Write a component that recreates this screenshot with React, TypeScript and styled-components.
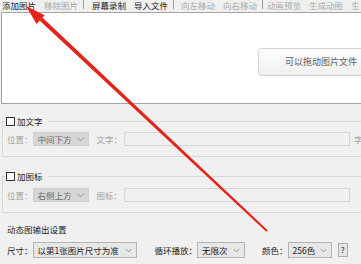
import React from 'react';
import styled, { createGlobalStyle } from 'styled-components';

const GlobalStyle = createGlobalStyle`
  html, body {
    margin: 0;
    padding: 0;
    background: #f0f0f0;
  }
  body {
    font-family: "Noto Sans CJK SC", "Liberation Sans", sans-serif;
    font-size: 8.5px;
  }
`;

const Window = styled.div`
  position: relative;
  width: 361px;
  height: 264px;
  overflow: hidden;
  background: #f0f0f0;
`;

const Toolbar = styled.div`
  display: flex;
  align-items: flex-start;
  height: 12px;
  padding-left: 2px;
  line-height: 10px;
  white-space: nowrap;
`;

const ToolItem = styled.span<{ $disabled?: boolean }>`
  margin-right: 8px;
  color: ${p => (p.$disabled ? '#a9a9a9' : '#1c1c1c')};
`;

const ToolSep = styled.span<{ $after?: number }>`
  width: 1px;
  height: 9px;
  margin: 0 ${p => p.$after ?? 8}px 0 -3px;
  background: #9a9a9a;
  flex-shrink: 0;
`;

const DropArea = styled.div`
  margin-left: 1px;
  width: 420px;
  height: 92px;
  box-sizing: border-box;
  border: 1px solid #a3a3a3;
  background: #fff;
  padding: 35px 0 0 256px;
`;

const DropHint = styled.div`
  width: 120px;
  height: 28px;
  box-sizing: border-box;
  border: 1px solid #d2d2d2;
  border-radius: 4px;
  background: linear-gradient(#ffffff, #efefef);
  color: #5a5a5a;
  font-size: 9px;
  line-height: 26px;
  padding-left: 26px;
  white-space: nowrap;
`;

const Group = styled.fieldset<{ $top: number }>`
  margin: ${p => p.$top}px 0 0 2px;
  width: 420px;
  min-width: 0;
  padding: 0 0 10px 3px;
  border: 1px solid #d8d8d8;
  box-sizing: border-box;
`;

const Legend = styled.legend`
  display: flex;
  align-items: center;
  padding: 0 5px 0 0;
  height: 10px;
  line-height: 10px;
  color: #1c1c1c;
`;

const CheckBox = styled.span`
  width: 9px;
  height: 9px;
  box-sizing: border-box;
  border: 1px solid #333;
  background: #fff;
  margin-right: 2px;
`;

const Row = styled.div<{ $top: number; $left?: number }>`
  display: flex;
  align-items: center;
  margin-top: ${p => p.$top}px;
  margin-left: ${p => p.$left ?? 1}px;
  white-space: nowrap;
  line-height: 10px;
`;

const Label = styled.span<{ $disabled?: boolean; $gap?: number }>`
  margin-left: ${p => p.$gap || 0}px;
  color: ${p => (p.$disabled ? '#a3a3a3' : '#1c1c1c')};
`;

const Select = styled.div<{ $width: number; $height: number; $disabled?: boolean; $gap?: number }>`
  display: flex;
  align-items: center;
  justify-content: space-between;
  width: ${p => p.$width}px;
  height: ${p => p.$height}px;
  margin-left: ${p => p.$gap || 0}px;
  box-sizing: border-box;
  padding: 0 4px 0 4px;
  border: 1px solid ${p => (p.$disabled ? '#cfcfcf' : '#b4b4b4')};
  background: ${p => (p.$disabled ? '#d6d6d6' : '#e7e7e7')};
  color: ${p => (p.$disabled ? '#6a6a6a' : '#1c1c1c')};
  flex-shrink: 0;
`;

const TextBox = styled.div<{ $width: number }>`
  width: ${p => p.$width}px;
  height: 14px;
  margin-left: 2px;
  box-sizing: border-box;
  border: 1px solid #d4d4d4;
  background: #f0f0f0;
  flex-shrink: 0;
`;

const SectionTitle = styled.div`
  margin: 11px 0 0 7px;
  line-height: 10px;
  color: #1c1c1c;
`;

const HelpButton = styled.div`
  width: 10px;
  height: 14px;
  margin-left: 6px;
  box-sizing: border-box;
  border: 1px solid #adadad;
  background: #e5e5e5;
  color: #1c1c1c;
  font-size: 8px;
  line-height: 12px;
  text-align: center;
`;

const Overlay = styled.svg`
  position: absolute;
  left: 0;
  top: 0;
  pointer-events: none;
`;

const Chevron: React.FC = () => (
  <svg width="7" height="5" viewBox="0 0 7 5">
    <path d="M0.8 1 L3.5 3.8 L6.2 1" fill="none" stroke="#8a8a8a" strokeWidth="0.9" />
  </svg>
);

const App: React.FC = () => {
  return (
    <>
      <GlobalStyle />
      <Window>
        <Toolbar>
          <ToolItem>添加图片</ToolItem>
          <ToolItem $disabled>移除图片</ToolItem>
          <ToolSep />
          <ToolItem>屏幕录制</ToolItem>
          <ToolItem>导入文件</ToolItem>
          <ToolSep $after={7} />
          <ToolItem $disabled>向左移动</ToolItem>
          <ToolItem $disabled>向右移动</ToolItem>
          <ToolSep $after={4} />
          <ToolItem $disabled>动画预览</ToolItem>
          <ToolItem $disabled>生成动图</ToolItem>
          <ToolItem $disabled>生</ToolItem>
        </Toolbar>

        <DropArea>
          <DropHint>可以拖动图片文件</DropHint>
        </DropArea>

        <Group $top={12}>
          <Legend>
            <CheckBox />
            加文字
          </Legend>
          <Row $top={6}>
            <Label $disabled>位置：</Label>
            <Select $width={56} $height={14} $disabled>
              中间下方
              <Chevron />
            </Select>
            <Label $disabled $gap={8}>文字：</Label>
            <TextBox $width={226} />
            <Label $disabled $gap={4}>字</Label>
          </Row>
        </Group>

        <Group $top={14}>
          <Legend>
            <CheckBox />
            加图标
          </Legend>
          <Row $top={7}>
            <Label $disabled>位置：</Label>
            <Select $width={56} $height={14} $disabled>
              右侧上方
              <Chevron />
            </Select>
            <Label $disabled $gap={8}>图标：</Label>
            <TextBox $width={226} />
          </Row>
        </Group>

        <SectionTitle>动态图输出设置</SectionTitle>
        <Row $top={8} $left={7}>
          <Label>尺寸：</Label>
          <Select $width={104} $height={16}>
            以第1张图片尺寸为准
            <Chevron />
          </Select>
          <Label $gap={18}>循环播放：</Label>
          <Select $width={48} $height={16}>
            无限次
            <Chevron />
          </Select>
          <Label $gap={17}>颜色：</Label>
          <Select $width={44} $height={16}>
            256色
            <Chevron />
          </Select>
          <HelpButton>?</HelpButton>
        </Row>

        <Overlay width="361" height="264" viewBox="0 0 361 264">
          <polygon points="39.6,20.5 42.4,17.5 267.7,230.3 266.3,231.7" fill="#e3241b" />
          <polygon points="26,6 36.5,24.1 44.7,15.3" fill="#e3241b" />
        </Overlay>
      </Window>
    </>
  );
};

export default App;
